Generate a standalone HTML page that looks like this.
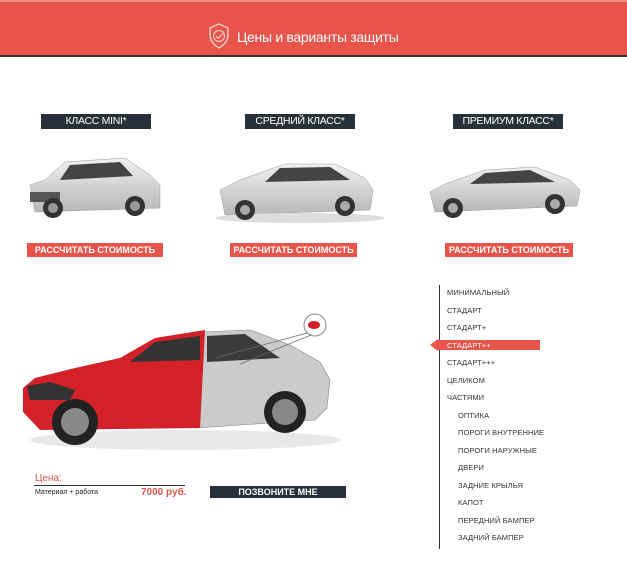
<!DOCTYPE html>
<html><head><meta charset="utf-8"><style>
*{margin:0;padding:0;box-sizing:border-box}
body{width:627px;height:572px;background:#fff;font-family:"Liberation Sans","DejaVu Sans",sans-serif;position:relative;overflow:hidden}
.hdr{position:absolute;left:0;top:0;width:627px;height:57px;background:#e8544a;border-top:2px solid #f08a80;border-bottom:2px solid #333}
.hdr span{position:absolute;left:237px;top:27px;color:#fff;font-size:14px;letter-spacing:-.3px}
.lbl{position:absolute;top:114px;height:15px;width:110px;background:#283039;color:#fff;font-size:10.5px;text-align:center;line-height:15px;letter-spacing:-.3px}
.btn{position:absolute;top:243px;height:14px;background:#e8544a;color:#fff;font-size:9px;font-weight:bold;text-align:center;line-height:14px}
.menu{position:absolute;left:439px;top:285px;width:1px;height:264px;background:#333}
.it{position:absolute;font-size:7.5px;color:#333;letter-spacing:.1px}
.act{position:absolute;left:437px;top:340px;width:103px;height:10px;background:#e8544a}
svg{position:absolute}
</style></head><body>
<div class="hdr">
<svg style="left:208px;top:21px" width="22" height="26" viewBox="0 0 22 26"><path d="M11 1 L20 5 V12 C20 18 16 22 11 25 C6 22 2 18 2 12 V5 Z" fill="none" stroke="#f6c8c3" stroke-width="1.5"/><circle cx="11" cy="13" r="5.5" fill="none" stroke="#f6c8c3" stroke-width="1.2"/><path d="M8 13 L10.5 15.5 L14.5 10.5" fill="none" stroke="#f6c8c3" stroke-width="1.2"/></svg>
<span>Цены и варианты защиты</span></div>

<div class="lbl" style="left:41px">КЛАСС MINI*</div>
<div class="lbl" style="left:245px">СРЕДНИЙ КЛАСС*</div>
<div class="lbl" style="left:453px">ПРЕМИУМ КЛАСС*</div>

<svg style="left:15px;top:140px" width="570" height="90" viewBox="0 0 570 90">
<defs><linearGradient id="g" x1="0" y1="0" x2="0" y2="1"><stop offset="0" stop-color="#f0f0f0"/><stop offset="1" stop-color="#b8b8b8"/></linearGradient></defs>
<path d="M15 45 L30 40 L50 22 L110 18 L135 35 L145 45 L145 68 L20 72 Z" fill="url(#g)" stroke="#999" stroke-width=".5"/>
<path d="M55 25 L105 22 L118 36 L45 40 Z" fill="#444"/>
<rect x="15" y="52" width="30" height="10" fill="#555"/>
<circle cx="38" cy="68" r="10" fill="#333"/><circle cx="120" cy="66" r="10" fill="#333"/>
<circle cx="38" cy="68" r="5" fill="#999"/><circle cx="120" cy="66" r="5" fill="#999"/>
<path d="M205 50 L225 40 L270 24 L320 24 L350 38 L358 50 L355 70 L210 75 Z" fill="url(#g)" stroke="#999" stroke-width=".5"/>
<path d="M265 28 L315 27 L335 40 L250 42 Z" fill="#444"/>
<ellipse cx="285" cy="78" rx="85" ry="5" fill="#ddd"/>
<circle cx="230" cy="70" r="10" fill="#333"/><circle cx="330" cy="66" r="10" fill="#333"/>
<circle cx="230" cy="70" r="5" fill="#aaa"/><circle cx="330" cy="66" r="5" fill="#aaa"/>
<path d="M415 52 L430 44 L470 30 L520 27 L555 40 L565 50 L562 66 L420 72 Z" fill="url(#g)" stroke="#999" stroke-width=".5"/>
<path d="M470 33 L515 30 L540 42 L455 44 Z" fill="#444"/>
<circle cx="438" cy="68" r="10" fill="#333"/><circle cx="540" cy="64" r="10" fill="#333"/>
<circle cx="438" cy="68" r="5" fill="#aaa"/><circle cx="540" cy="64" r="5" fill="#aaa"/>
</svg>

<div class="btn" style="left:27px;width:136px">РАССЧИТАТЬ СТОИМОСТЬ</div>
<div class="btn" style="left:230px;width:127px">РАССЧИТАТЬ СТОИМОСТЬ</div>
<div class="btn" style="left:445px;width:128px">РАССЧИТАТЬ СТОИМОСТЬ</div>

<svg style="left:15px;top:300px" width="330" height="165" viewBox="0 0 330 165">
<ellipse cx="170" cy="140" rx="155" ry="10" fill="#e8e8e8"/>
<path d="M185 32 L235 30 L275 45 L305 62 L315 80 L312 108 L300 120 L180 128 Z" fill="#cbcbcb" stroke="#888" stroke-width=".6"/>
<path d="M8 88 L20 78 L60 68 L105 58 L140 38 L190 30 L185 128 L25 130 L8 112 Z" fill="#d42028"/>
<path d="M140 42 L185 36 L185 60 L115 62 Z" fill="#333"/>
<path d="M192 36 L230 34 L265 58 L192 62 Z" fill="#3a3a3a"/>
<path d="M12 86 L35 82 L60 90 L55 100 L15 100 Z" fill="#333"/>
<circle cx="60" cy="122" r="23" fill="#222"/><circle cx="60" cy="122" r="14" fill="#888"/>
<circle cx="270" cy="112" r="21" fill="#222"/><circle cx="270" cy="112" r="13" fill="#888"/>
<circle cx="300" cy="25" r="11" fill="#fff" stroke="#888"/><ellipse cx="299" cy="25" rx="6" ry="4" fill="#d42028"/>
<path d="M292 33 L200 58 M296 35 L225 64" stroke="#666" stroke-width=".7"/>
</svg>

<div class="menu"></div>
<div class="act"></div>
<svg style="left:430px;top:339px" width="8" height="12"><path d="M8 0 L0 6 L8 12 Z" fill="#e8544a"/></svg>
<div class="it" style="left:447px;top:288px">МИНИМАЛЬНЫЙ</div>
<div class="it" style="left:447px;top:306px">СТАДАРТ</div>
<div class="it" style="left:447px;top:323px">СТАДАРТ+</div>
<div class="it" style="left:447px;top:341px;color:#fff">СТАДАРТ++</div>
<div class="it" style="left:447px;top:358px">СТАДАРТ+++</div>
<div class="it" style="left:447px;top:376px">ЦЕЛИКОМ</div>
<div class="it" style="left:447px;top:393px">ЧАСТЯМИ</div>
<div class="it" style="left:458px;top:411px">ОПТИКА</div>
<div class="it" style="left:458px;top:428px">ПОРОГИ ВНУТРЕННИЕ</div>
<div class="it" style="left:458px;top:446px">ПОРОГИ НАРУЖНЫЕ</div>
<div class="it" style="left:458px;top:463px">ДВЕРИ</div>
<div class="it" style="left:458px;top:481px">ЗАДНИЕ КРЫЛЬЯ</div>
<div class="it" style="left:458px;top:498px">КАПОТ</div>
<div class="it" style="left:458px;top:516px">ПЕРЕДНИЙ БАМПЕР</div>
<div class="it" style="left:458px;top:533px">ЗАДНИЙ БАМПЕР</div>

<div style="position:absolute;left:35px;top:473px;color:#e0564c;font-size:10px">Цена:</div>
<div style="position:absolute;left:34px;top:485px;width:151px;height:1px;background:#333"></div>
<div style="position:absolute;left:35px;top:489px;font-size:7px;color:#222">Материал + работа</div>
<div style="position:absolute;left:141px;top:487px;font-size:10px;color:#e0564c;font-weight:bold">7000 руб.</div>
<div style="position:absolute;left:210px;top:486px;width:136px;height:12px;background:#283039;color:#fff;font-size:9px;font-weight:bold;text-align:center;line-height:12px">ПОЗВОНИТЕ МНЕ</div>
</body></html>
